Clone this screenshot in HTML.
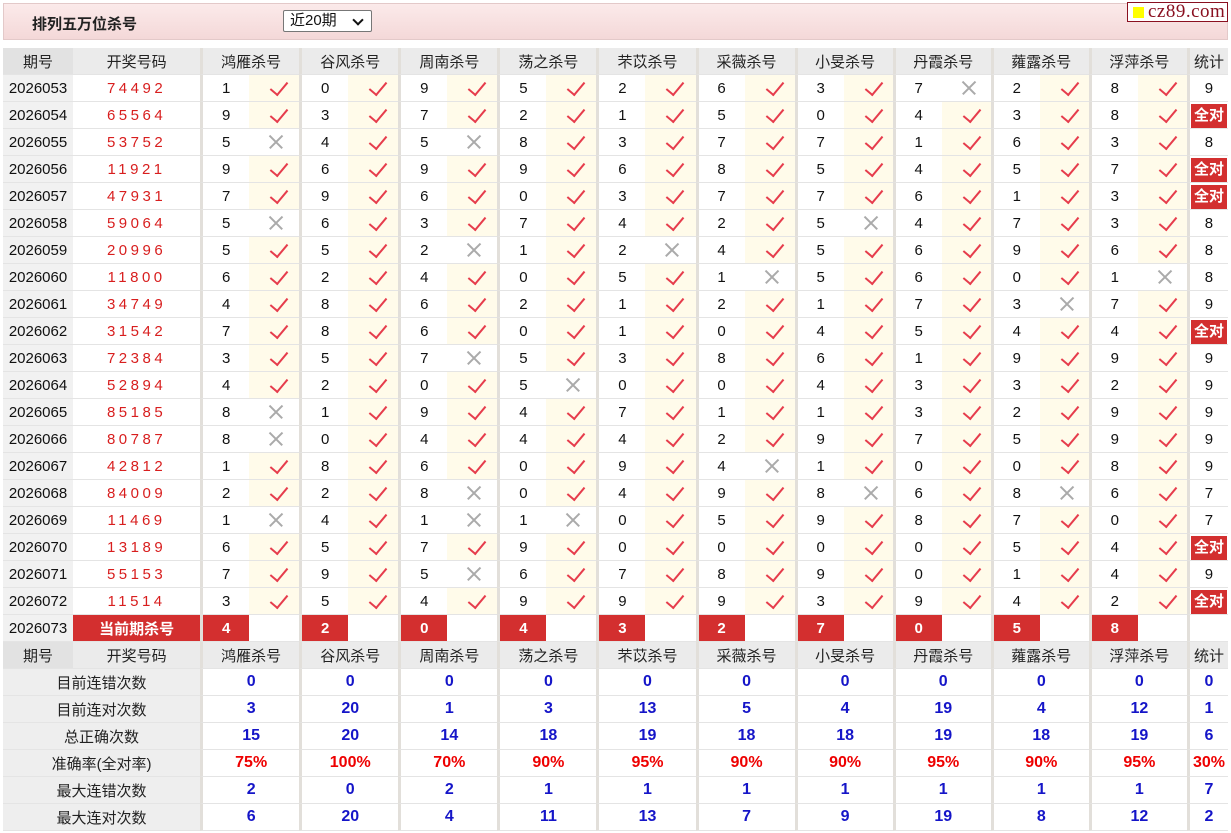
<!DOCTYPE html>
<html><head><meta charset="utf-8">
<style>
*{margin:0;padding:0;box-sizing:border-box}
body{width:1231px;height:833px;background:#fff;font-family:"Liberation Sans","Noto Sans CJK SC",sans-serif;position:relative;overflow:hidden}
.top{position:absolute;left:3px;top:3px;width:1225px;height:37px;background:linear-gradient(#fbeaea,#f4d8d8);border:1px solid #e3c9c9}
.title{position:absolute;left:28px;top:9px;font-size:15px;font-weight:bold;color:#222}
.sel{position:absolute;left:279px;top:6px;width:89px;height:22px;border:1px solid #777;border-radius:2px;background:#fff;font-size:15px;padding-left:6px;line-height:20px;color:#111}
.sel:after{content:"";position:absolute;right:9px;top:5px;width:6px;height:6px;border-right:2px solid #111;border-bottom:2px solid #111;transform:rotate(45deg)}
.logo{position:absolute;left:1127px;top:2px;width:101px;height:20px;background:#fff;border:1px solid #8a1020;font-family:"Liberation Serif",serif;font-size:19px;color:#8a1020;line-height:18px;padding-left:20px;letter-spacing:0.5px}
.logo:before{content:"";position:absolute;left:5px;top:4px;width:11px;height:11px;background:#ff0}
table{position:absolute;left:3px;top:48px;border-collapse:separate;border-spacing:0;table-layout:fixed;width:1225px}
td{height:27px;padding:0;border-bottom:1px solid #e4e4e4;text-align:center;font-size:15px;color:#111;white-space:nowrap;overflow:hidden;position:relative}
.h td{background:#ebebeb;color:#222;font-size:15px}
.h td.p{background:#e2e2e2}
td.p{background:#f1f1f1}
td.d{color:#d81e1e;letter-spacing:3.5px}
td.n{border-left:3px solid #e2dfda}
td.k{background:#fffbea}
td.k:after{content:"";position:absolute;left:25px;top:3px;width:8px;height:15px;border-right:2.5px solid #e63c4c;border-bottom:2.5px solid #e63c4c;transform:rotate(40deg)}
td.x:before,td.x:after{content:"";position:absolute;left:18px;top:12px;width:18px;height:1.6px;background:#aaa;transform:rotate(45deg)}
td.x:after{transform:rotate(-45deg)}
td.s{border-left:3px solid #e2dfda}
td.a{border-left:3px solid #e2dfda;background:#fff}
td.a span{display:block;margin:1px 1px 0 1px;height:24px;background:#d32f2f;color:#fff;font-weight:bold;line-height:24px;font-size:15px}
.c td.r{background:#d32f2f;color:#fff;font-weight:bold}
.c td.w{background:#fff}
.st td{font-size:16px;font-weight:bold;color:#1515c8;border-bottom:1px solid #e4e4e4}
.st td.l{background:#eeeeee;color:#222;font-weight:normal;font-size:15px}
.st td.g{border-left:3px solid #e2dfda}
.st.pc td{color:#e00}
.st.pc td.l{color:#222}
</style></head><body>
<div class="top"><div class="title">排列五万位杀号</div><div class="sel">近20期</div></div>
<div class="logo">cz89.com</div>
<table>
<colgroup><col style="width:70px"><col style="width:127px"><col style="width:49px"><col style="width:50px"><col style="width:49px"><col style="width:50px"><col style="width:49px"><col style="width:50px"><col style="width:49px"><col style="width:50px"><col style="width:49px"><col style="width:50px"><col style="width:49px"><col style="width:50px"><col style="width:49px"><col style="width:49px"><col style="width:49px"><col style="width:49px"><col style="width:49px"><col style="width:49px"><col style="width:49px"><col style="width:49px"><col style="width:41px"></colgroup>
<tr class="h"><td class="p">期号</td><td>开奖号码</td><td class="n" colspan="2">鸿雁杀号</td><td class="n" colspan="2">谷风杀号</td><td class="n" colspan="2">周南杀号</td><td class="n" colspan="2">荡之杀号</td><td class="n" colspan="2">芣苡杀号</td><td class="n" colspan="2">采薇杀号</td><td class="n" colspan="2">小旻杀号</td><td class="n" colspan="2">丹霞杀号</td><td class="n" colspan="2">蕹露杀号</td><td class="n" colspan="2">浮萍杀号</td><td class="s">统计</td></tr>
<tr><td class="p">2026053</td><td class="d">74492</td><td class="n">1</td><td class="k"></td><td class="n">0</td><td class="k"></td><td class="n">9</td><td class="k"></td><td class="n">5</td><td class="k"></td><td class="n">2</td><td class="k"></td><td class="n">6</td><td class="k"></td><td class="n">3</td><td class="k"></td><td class="n">7</td><td class="x"></td><td class="n">2</td><td class="k"></td><td class="n">8</td><td class="k"></td><td class="s">9</td></tr>
<tr><td class="p">2026054</td><td class="d">65564</td><td class="n">9</td><td class="k"></td><td class="n">3</td><td class="k"></td><td class="n">7</td><td class="k"></td><td class="n">2</td><td class="k"></td><td class="n">1</td><td class="k"></td><td class="n">5</td><td class="k"></td><td class="n">0</td><td class="k"></td><td class="n">4</td><td class="k"></td><td class="n">3</td><td class="k"></td><td class="n">8</td><td class="k"></td><td class="a"><span>全对</span></td></tr>
<tr><td class="p">2026055</td><td class="d">53752</td><td class="n">5</td><td class="x"></td><td class="n">4</td><td class="k"></td><td class="n">5</td><td class="x"></td><td class="n">8</td><td class="k"></td><td class="n">3</td><td class="k"></td><td class="n">7</td><td class="k"></td><td class="n">7</td><td class="k"></td><td class="n">1</td><td class="k"></td><td class="n">6</td><td class="k"></td><td class="n">3</td><td class="k"></td><td class="s">8</td></tr>
<tr><td class="p">2026056</td><td class="d">11921</td><td class="n">9</td><td class="k"></td><td class="n">6</td><td class="k"></td><td class="n">9</td><td class="k"></td><td class="n">9</td><td class="k"></td><td class="n">6</td><td class="k"></td><td class="n">8</td><td class="k"></td><td class="n">5</td><td class="k"></td><td class="n">4</td><td class="k"></td><td class="n">5</td><td class="k"></td><td class="n">7</td><td class="k"></td><td class="a"><span>全对</span></td></tr>
<tr><td class="p">2026057</td><td class="d">47931</td><td class="n">7</td><td class="k"></td><td class="n">9</td><td class="k"></td><td class="n">6</td><td class="k"></td><td class="n">0</td><td class="k"></td><td class="n">3</td><td class="k"></td><td class="n">7</td><td class="k"></td><td class="n">7</td><td class="k"></td><td class="n">6</td><td class="k"></td><td class="n">1</td><td class="k"></td><td class="n">3</td><td class="k"></td><td class="a"><span>全对</span></td></tr>
<tr><td class="p">2026058</td><td class="d">59064</td><td class="n">5</td><td class="x"></td><td class="n">6</td><td class="k"></td><td class="n">3</td><td class="k"></td><td class="n">7</td><td class="k"></td><td class="n">4</td><td class="k"></td><td class="n">2</td><td class="k"></td><td class="n">5</td><td class="x"></td><td class="n">4</td><td class="k"></td><td class="n">7</td><td class="k"></td><td class="n">3</td><td class="k"></td><td class="s">8</td></tr>
<tr><td class="p">2026059</td><td class="d">20996</td><td class="n">5</td><td class="k"></td><td class="n">5</td><td class="k"></td><td class="n">2</td><td class="x"></td><td class="n">1</td><td class="k"></td><td class="n">2</td><td class="x"></td><td class="n">4</td><td class="k"></td><td class="n">5</td><td class="k"></td><td class="n">6</td><td class="k"></td><td class="n">9</td><td class="k"></td><td class="n">6</td><td class="k"></td><td class="s">8</td></tr>
<tr><td class="p">2026060</td><td class="d">11800</td><td class="n">6</td><td class="k"></td><td class="n">2</td><td class="k"></td><td class="n">4</td><td class="k"></td><td class="n">0</td><td class="k"></td><td class="n">5</td><td class="k"></td><td class="n">1</td><td class="x"></td><td class="n">5</td><td class="k"></td><td class="n">6</td><td class="k"></td><td class="n">0</td><td class="k"></td><td class="n">1</td><td class="x"></td><td class="s">8</td></tr>
<tr><td class="p">2026061</td><td class="d">34749</td><td class="n">4</td><td class="k"></td><td class="n">8</td><td class="k"></td><td class="n">6</td><td class="k"></td><td class="n">2</td><td class="k"></td><td class="n">1</td><td class="k"></td><td class="n">2</td><td class="k"></td><td class="n">1</td><td class="k"></td><td class="n">7</td><td class="k"></td><td class="n">3</td><td class="x"></td><td class="n">7</td><td class="k"></td><td class="s">9</td></tr>
<tr><td class="p">2026062</td><td class="d">31542</td><td class="n">7</td><td class="k"></td><td class="n">8</td><td class="k"></td><td class="n">6</td><td class="k"></td><td class="n">0</td><td class="k"></td><td class="n">1</td><td class="k"></td><td class="n">0</td><td class="k"></td><td class="n">4</td><td class="k"></td><td class="n">5</td><td class="k"></td><td class="n">4</td><td class="k"></td><td class="n">4</td><td class="k"></td><td class="a"><span>全对</span></td></tr>
<tr><td class="p">2026063</td><td class="d">72384</td><td class="n">3</td><td class="k"></td><td class="n">5</td><td class="k"></td><td class="n">7</td><td class="x"></td><td class="n">5</td><td class="k"></td><td class="n">3</td><td class="k"></td><td class="n">8</td><td class="k"></td><td class="n">6</td><td class="k"></td><td class="n">1</td><td class="k"></td><td class="n">9</td><td class="k"></td><td class="n">9</td><td class="k"></td><td class="s">9</td></tr>
<tr><td class="p">2026064</td><td class="d">52894</td><td class="n">4</td><td class="k"></td><td class="n">2</td><td class="k"></td><td class="n">0</td><td class="k"></td><td class="n">5</td><td class="x"></td><td class="n">0</td><td class="k"></td><td class="n">0</td><td class="k"></td><td class="n">4</td><td class="k"></td><td class="n">3</td><td class="k"></td><td class="n">3</td><td class="k"></td><td class="n">2</td><td class="k"></td><td class="s">9</td></tr>
<tr><td class="p">2026065</td><td class="d">85185</td><td class="n">8</td><td class="x"></td><td class="n">1</td><td class="k"></td><td class="n">9</td><td class="k"></td><td class="n">4</td><td class="k"></td><td class="n">7</td><td class="k"></td><td class="n">1</td><td class="k"></td><td class="n">1</td><td class="k"></td><td class="n">3</td><td class="k"></td><td class="n">2</td><td class="k"></td><td class="n">9</td><td class="k"></td><td class="s">9</td></tr>
<tr><td class="p">2026066</td><td class="d">80787</td><td class="n">8</td><td class="x"></td><td class="n">0</td><td class="k"></td><td class="n">4</td><td class="k"></td><td class="n">4</td><td class="k"></td><td class="n">4</td><td class="k"></td><td class="n">2</td><td class="k"></td><td class="n">9</td><td class="k"></td><td class="n">7</td><td class="k"></td><td class="n">5</td><td class="k"></td><td class="n">9</td><td class="k"></td><td class="s">9</td></tr>
<tr><td class="p">2026067</td><td class="d">42812</td><td class="n">1</td><td class="k"></td><td class="n">8</td><td class="k"></td><td class="n">6</td><td class="k"></td><td class="n">0</td><td class="k"></td><td class="n">9</td><td class="k"></td><td class="n">4</td><td class="x"></td><td class="n">1</td><td class="k"></td><td class="n">0</td><td class="k"></td><td class="n">0</td><td class="k"></td><td class="n">8</td><td class="k"></td><td class="s">9</td></tr>
<tr><td class="p">2026068</td><td class="d">84009</td><td class="n">2</td><td class="k"></td><td class="n">2</td><td class="k"></td><td class="n">8</td><td class="x"></td><td class="n">0</td><td class="k"></td><td class="n">4</td><td class="k"></td><td class="n">9</td><td class="k"></td><td class="n">8</td><td class="x"></td><td class="n">6</td><td class="k"></td><td class="n">8</td><td class="x"></td><td class="n">6</td><td class="k"></td><td class="s">7</td></tr>
<tr><td class="p">2026069</td><td class="d">11469</td><td class="n">1</td><td class="x"></td><td class="n">4</td><td class="k"></td><td class="n">1</td><td class="x"></td><td class="n">1</td><td class="x"></td><td class="n">0</td><td class="k"></td><td class="n">5</td><td class="k"></td><td class="n">9</td><td class="k"></td><td class="n">8</td><td class="k"></td><td class="n">7</td><td class="k"></td><td class="n">0</td><td class="k"></td><td class="s">7</td></tr>
<tr><td class="p">2026070</td><td class="d">13189</td><td class="n">6</td><td class="k"></td><td class="n">5</td><td class="k"></td><td class="n">7</td><td class="k"></td><td class="n">9</td><td class="k"></td><td class="n">0</td><td class="k"></td><td class="n">0</td><td class="k"></td><td class="n">0</td><td class="k"></td><td class="n">0</td><td class="k"></td><td class="n">5</td><td class="k"></td><td class="n">4</td><td class="k"></td><td class="a"><span>全对</span></td></tr>
<tr><td class="p">2026071</td><td class="d">55153</td><td class="n">7</td><td class="k"></td><td class="n">9</td><td class="k"></td><td class="n">5</td><td class="x"></td><td class="n">6</td><td class="k"></td><td class="n">7</td><td class="k"></td><td class="n">8</td><td class="k"></td><td class="n">9</td><td class="k"></td><td class="n">0</td><td class="k"></td><td class="n">1</td><td class="k"></td><td class="n">4</td><td class="k"></td><td class="s">9</td></tr>
<tr><td class="p">2026072</td><td class="d">11514</td><td class="n">3</td><td class="k"></td><td class="n">5</td><td class="k"></td><td class="n">4</td><td class="k"></td><td class="n">9</td><td class="k"></td><td class="n">9</td><td class="k"></td><td class="n">9</td><td class="k"></td><td class="n">3</td><td class="k"></td><td class="n">9</td><td class="k"></td><td class="n">4</td><td class="k"></td><td class="n">2</td><td class="k"></td><td class="a"><span>全对</span></td></tr>
<tr class="c"><td class="p">2026073</td><td class="r">当前期杀号</td><td class="n r">4</td><td class="w"></td><td class="n r">2</td><td class="w"></td><td class="n r">0</td><td class="w"></td><td class="n r">4</td><td class="w"></td><td class="n r">3</td><td class="w"></td><td class="n r">2</td><td class="w"></td><td class="n r">7</td><td class="w"></td><td class="n r">0</td><td class="w"></td><td class="n r">5</td><td class="w"></td><td class="n r">8</td><td class="w"></td><td class="s"></td></tr>
<tr class="h"><td class="p">期号</td><td>开奖号码</td><td class="n" colspan="2">鸿雁杀号</td><td class="n" colspan="2">谷风杀号</td><td class="n" colspan="2">周南杀号</td><td class="n" colspan="2">荡之杀号</td><td class="n" colspan="2">芣苡杀号</td><td class="n" colspan="2">采薇杀号</td><td class="n" colspan="2">小旻杀号</td><td class="n" colspan="2">丹霞杀号</td><td class="n" colspan="2">蕹露杀号</td><td class="n" colspan="2">浮萍杀号</td><td class="s">统计</td></tr>
<tr class="st"><td class="l" colspan="2">目前连错次数</td><td class="g" colspan="2">0</td><td class="g" colspan="2">0</td><td class="g" colspan="2">0</td><td class="g" colspan="2">0</td><td class="g" colspan="2">0</td><td class="g" colspan="2">0</td><td class="g" colspan="2">0</td><td class="g" colspan="2">0</td><td class="g" colspan="2">0</td><td class="g" colspan="2">0</td><td class="g">0</td></tr>
<tr class="st"><td class="l" colspan="2">目前连对次数</td><td class="g" colspan="2">3</td><td class="g" colspan="2">20</td><td class="g" colspan="2">1</td><td class="g" colspan="2">3</td><td class="g" colspan="2">13</td><td class="g" colspan="2">5</td><td class="g" colspan="2">4</td><td class="g" colspan="2">19</td><td class="g" colspan="2">4</td><td class="g" colspan="2">12</td><td class="g">1</td></tr>
<tr class="st"><td class="l" colspan="2">总正确次数</td><td class="g" colspan="2">15</td><td class="g" colspan="2">20</td><td class="g" colspan="2">14</td><td class="g" colspan="2">18</td><td class="g" colspan="2">19</td><td class="g" colspan="2">18</td><td class="g" colspan="2">18</td><td class="g" colspan="2">19</td><td class="g" colspan="2">18</td><td class="g" colspan="2">19</td><td class="g">6</td></tr>
<tr class="st pc"><td class="l" colspan="2">准确率(全对率)</td><td class="g" colspan="2">75%</td><td class="g" colspan="2">100%</td><td class="g" colspan="2">70%</td><td class="g" colspan="2">90%</td><td class="g" colspan="2">95%</td><td class="g" colspan="2">90%</td><td class="g" colspan="2">90%</td><td class="g" colspan="2">95%</td><td class="g" colspan="2">90%</td><td class="g" colspan="2">95%</td><td class="g">30%</td></tr>
<tr class="st"><td class="l" colspan="2">最大连错次数</td><td class="g" colspan="2">2</td><td class="g" colspan="2">0</td><td class="g" colspan="2">2</td><td class="g" colspan="2">1</td><td class="g" colspan="2">1</td><td class="g" colspan="2">1</td><td class="g" colspan="2">1</td><td class="g" colspan="2">1</td><td class="g" colspan="2">1</td><td class="g" colspan="2">1</td><td class="g">7</td></tr>
<tr class="st"><td class="l" colspan="2">最大连对次数</td><td class="g" colspan="2">6</td><td class="g" colspan="2">20</td><td class="g" colspan="2">4</td><td class="g" colspan="2">11</td><td class="g" colspan="2">13</td><td class="g" colspan="2">7</td><td class="g" colspan="2">9</td><td class="g" colspan="2">19</td><td class="g" colspan="2">8</td><td class="g" colspan="2">12</td><td class="g">2</td></tr>
</table>
</body></html>
